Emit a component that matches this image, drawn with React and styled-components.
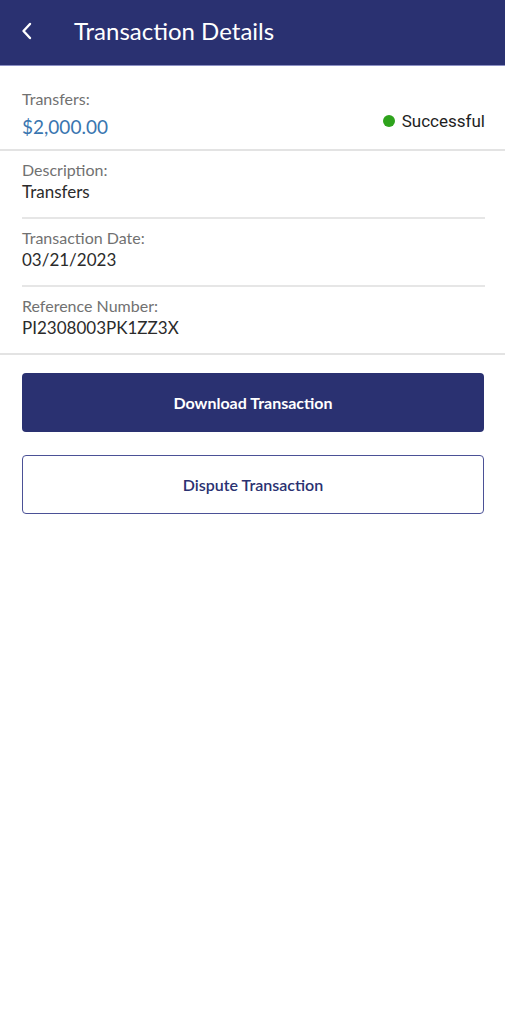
import React from "react";
import styled, { createGlobalStyle } from "styled-components";

const GlobalStyle = createGlobalStyle`
  html, body {
    margin: 0;
    padding: 0;
    background: #ffffff;
  }
  body {
    font-family: "Lato", "Open Sans", sans-serif;
  }
`;

const details = [
  { label: "Description:", value: "Transfers" },
  { label: "Transaction Date:", value: "03/21/2023" },
  { label: "Reference Number:", value: "PI2308003PK1ZZ3X" },
];

const App = () => {
  return (
    <Screen>
      <GlobalStyle />
      <Header>
        <BackButton aria-label="Back">
          <svg width="14" height="18" viewBox="0 0 14 18" fill="none">
            <path
              d="M10 2 L3.5 9 L10 16"
              stroke="#ffffff"
              strokeWidth="2.4"
              strokeLinecap="round"
              strokeLinejoin="round"
            />
          </svg>
        </BackButton>
        <Title>Transaction Details</Title>
      </Header>

      <Summary>
        <div>
          <Label>Transfers:</Label>
          <Amount>$2,000.00</Amount>
        </div>
        <Status>
          <Dot />
          Successful
        </Status>
      </Summary>

      <DetailList>
        {details.map((d, i) => (
          <DetailRow key={d.label} $last={i === details.length - 1}>
            <Label>{d.label}</Label>
            <Value>{d.value}</Value>
          </DetailRow>
        ))}
      </DetailList>

      <Actions>
        <Button $primary>Download Transaction</Button>
        <Button>Dispute Transaction</Button>
      </Actions>
    </Screen>
  );
};

const Screen = styled.div`
  width: 505px;
  min-height: 1010px;
  background: #ffffff;
`;

const Header = styled.header`
  height: 66px;
  background: #2a3171;
  border-bottom: 1px solid #8c90c4;
  display: flex;
  align-items: center;
  padding-left: 20px;
  box-sizing: border-box;
`;

const BackButton = styled.div`
  width: 16px;
  height: 18px;
  display: flex;
  align-items: center;
  margin-right: 38px;
  margin-top: -4px;
`;

const Title = styled.h1`
  margin: 0;
  margin-top: -4px;
  color: #ffffff;
  font-size: 24px;
  font-weight: 400;
`;

const Summary = styled.section`
  display: flex;
  justify-content: space-between;
  align-items: flex-end;
  padding: 23px 20px 10px 22px;
  border-bottom: 2px solid #e3e3e3;
`;

const Label = styled.div`
  color: #717171;
  font-size: 16px;
  line-height: 20px;
`;

const Amount = styled.div`
  color: #3a76b0;
  font-size: 19px;
  line-height: 24px;
  margin-top: 6px;
`;

const Status = styled.div`
  display: flex;
  align-items: center;
  gap: 7px;
  font-family: "Roboto", sans-serif;
  font-size: 17px;
  color: #1e1e1e;
  margin-bottom: 8px;
`;

const Dot = styled.span`
  width: 12px;
  height: 12px;
  border-radius: 50%;
  background: #2ea31c;
`;

const DetailList = styled.section`
  padding: 0 20px 0 22px;
  border-bottom: 2px solid #e3e3e3;
`;

const DetailRow = styled.div`
  padding: 9px 0 14px;
  border-bottom: ${(p) => (p.$last ? "none" : "2px solid #e6e6e6")};
`;

const Value = styled.div`
  color: #2b2b2b;
  font-size: 17px;
  line-height: 22px;
  margin-top: 1px;
`;

const Actions = styled.div`
  display: flex;
  flex-direction: column;
  gap: 23px;
  padding: 18px 21px 0 22px;
`;

const Button = styled.button`
  height: 59px;
  border-radius: 4px;
  font-family: "Lato", sans-serif;
  font-size: 16px;
  font-weight: ${(p) => (p.$primary ? 700 : 600)};
  color: ${(p) => (p.$primary ? "#ffffff" : "#2a3171")};
  background: ${(p) => (p.$primary ? "#2a3171" : "#ffffff")};
  border: ${(p) => (p.$primary ? "none" : "1.5px solid #4b5196")};
  cursor: pointer;
`;

export default App;
